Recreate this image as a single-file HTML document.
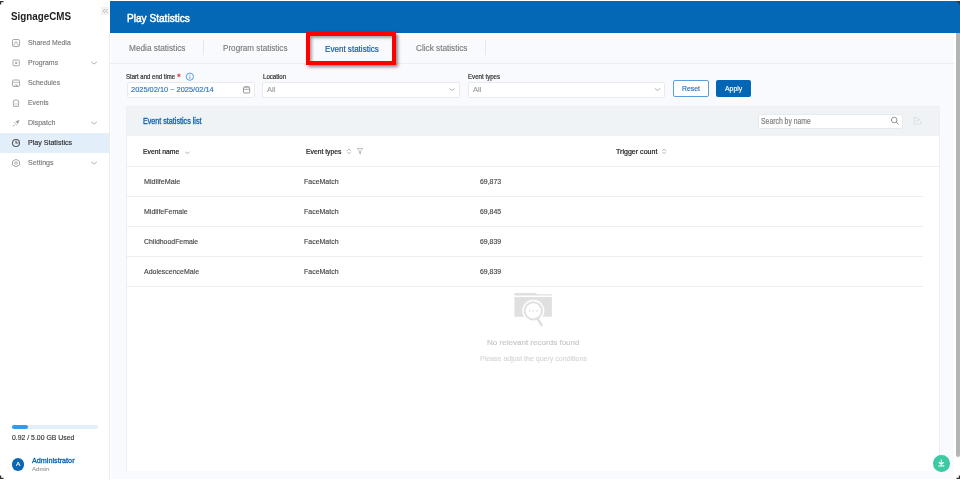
<!DOCTYPE html><html><head><meta charset="utf-8"><style>
*{margin:0;padding:0;box-sizing:border-box}
html,body{width:960px;height:480px;overflow:hidden;background:#fff;font-family:"Liberation Sans",sans-serif}
.t{position:absolute;white-space:nowrap;transform-origin:0 0;-webkit-text-stroke:0.15px currentColor}
.t.bd{-webkit-text-stroke:0}
.t.md{-webkit-text-stroke:0.2px currentColor}
.b{position:absolute}
</style></head><body>
<!-- sidebar -->
<div class="b" style="left:109px;top:33px;width:1px;height:447px;background:#ececec"></div>
<div class="b" style="left:101px;top:7px;width:8px;height:8px;background:#f2f2f2;border-radius:1px"></div>
<svg class="b" style="left:102px;top:8px" width="6" height="6" viewBox="0 0 6 6"><path d="M3 1 L1 3 L3 5 M5.5 1 L3.5 3 L5.5 5" stroke="#aaa" stroke-width="0.7" fill="none"/></svg>
<div class="b" style="left:0;top:133px;width:109px;height:20px;background:#e3eefb"></div>
<!-- main -->
<div class="b" style="left:110px;top:1px;width:850px;height:32px;background:#0468b7"></div>
<div class="b" style="left:110px;top:33px;width:846px;height:447px;background:#fff"></div>
<div class="b" style="left:111px;top:35px;width:843px;height:444px;background:#f9fafd"></div>
<div class="b" style="left:110px;top:63px;width:844px;height:1px;background:#ebedf0"></div>
<div class="b" style="left:203px;top:40px;width:1px;height:15px;background:#e6e8eb"></div>
<div class="b" style="left:485px;top:40px;width:1px;height:15px;background:#e6e8eb"></div>
<!-- red box -->
<div class="b" style="left:306px;top:32px;width:90px;height:33px;border:4px solid #f00;box-shadow:2px 2px 3px rgba(0,0,0,.45), inset 2px 2px 3px rgba(0,0,0,.35)"></div>
<!-- inputs -->
<div class="b" style="left:126.5px;top:81.5px;width:128px;height:16px;background:#fff;border:1px solid #e8eaee;border-radius:2px"></div>
<div class="b" style="left:262.3px;top:81.5px;width:197.5px;height:16px;background:#fff;border:1px solid #e8eaee;border-radius:2px"></div>
<div class="b" style="left:467.8px;top:81.5px;width:197.5px;height:16px;background:#fff;border:1px solid #e8eaee;border-radius:2px"></div>
<div class="b" style="left:673px;top:80px;width:36px;height:17px;background:#fff;border:1px solid #5e9ed6;border-radius:2px"></div>
<div class="b" style="left:716px;top:80px;width:35px;height:17px;background:#0366b4;border-radius:2px"></div>
<!-- card -->
<div class="b" style="left:126px;top:105.5px;width:814px;height:365.5px;background:#fff;border:1px solid #eceef1;border-bottom:none;border-radius:2px 2px 0 0"></div>
<div class="b" style="left:127px;top:106.5px;width:812px;height:29.5px;background:#f0f3f6"></div>
<div class="b" style="left:757.7px;top:113.6px;width:145.5px;height:15.3px;background:#fff;border:1px solid #e6e9ed;border-radius:2px"></div>
<div class="b" style="left:127px;top:166px;width:812px;height:1px;background:#eceef1"></div>
<div class="b" style="left:127px;top:196px;width:796px;height:1px;background:#eceef1"></div>
<div class="b" style="left:127px;top:226px;width:796px;height:1px;background:#eceef1"></div>
<div class="b" style="left:127px;top:256px;width:796px;height:1px;background:#eceef1"></div>
<div class="b" style="left:127px;top:286px;width:796px;height:1px;background:#eceef1"></div>
<!-- scrollbar -->
<div class="b" style="left:956px;top:33px;width:4px;height:424px;background:#b4b4b4;border-radius:0 0 2px 2px"></div>
<!-- green fab -->
<div class="b" style="left:933px;top:455px;width:16.5px;height:16.5px;background:#3ccaa4;border-radius:50%"></div>
<!-- progress -->
<div class="b" style="left:12px;top:425.3px;width:85.5px;height:4px;background:#e3effb;border-radius:2px"></div>
<div class="b" style="left:12px;top:425.3px;width:16px;height:4px;background:#2c9cf2;border-radius:2px"></div>
<!-- avatar -->
<div class="b" style="left:11.9px;top:458.1px;width:12.5px;height:12.5px;background:#0a67b5;border-radius:50%"></div>
<!-- empty icon -->
<svg class="b" style="left:510px;top:290px" width="48" height="40" viewBox="0 0 48 40">
<path d="M4.4 3.1 H26 L27 4.2 H41.9 V5.4 H4.4 Z" fill="#e0e0e0"/>
<path d="M4.4 7 H41.9 V26.8 H4.4 Z" fill="#e0e0e0"/>
<circle cx="23.3" cy="20.8" r="11" fill="#fff"/>
<circle cx="23.3" cy="20.8" r="8.6" fill="#fff" stroke="#e0e0e0" stroke-width="2"/>
<path d="M27.2 28 L31.5 35" stroke="#e0e0e0" stroke-width="2.6" stroke-linecap="round"/>
<circle cx="19.6" cy="20.9" r="0.8" fill="#e0e0e0"/><circle cx="23.3" cy="20.9" r="0.8" fill="#e0e0e0"/><circle cx="27" cy="20.9" r="0.8" fill="#e0e0e0"/>
</svg>
<!-- sidebar icons -->
<svg class="b" style="left:0;top:0" width="110" height="480" viewBox="0 0 110 480">
 <g fill="none" stroke="#a8a8a8" stroke-width="1">
  <rect x="12.5" y="39.5" width="7" height="7" rx="1.3"/>
  <path d="M13.5 45.5 L16 41.3 L18.5 45.5" stroke-width="0.9"/>
  <rect x="13" y="60" width="6.3" height="5.8" rx="0.6"/>
  <rect x="15.1" y="61.8" width="2.1" height="2.2" fill="#b0b0b0" stroke="none"/>
  <rect x="12.5" y="80" width="7" height="6.5" rx="1.3"/>
  <path d="M12.5 82.3 H19.5 M14 86 L15.5 84.5 L17 86 M16.3 84.4 L18 86" stroke-width="0.8"/>
  <path d="M13.4 100.8 Q16 98.6 18.6 100.8 V106.3 H13.4 Z"/>
  <path d="M14.5 104 H17.5" stroke-width="0.6"/>
 </g>
 <g fill="#9a9a9a">
  <path d="M19.6 119.8 L15.5 121.6 L17.9 124 Z"/>
  <path d="M14.2 122.3 L15.3 123.5 M16 124.3 L17 125.3" stroke="#9a9a9a" stroke-width="1"/>
  <path d="M12.5 126.3 L14.5 124.6 L14.2 126.3 Z"/>
 </g>
 <circle cx="16" cy="143" r="3.5" fill="none" stroke="#5a5a5a" stroke-width="1.1"/>
 <path d="M16 140.5 V143 H18.5" fill="none" stroke="#5a5a5a" stroke-width="1.1"/>
 <path d="M16 159.4 L19.5 161.3 V164.9 L16 166.8 L12.5 164.9 V161.3 Z" fill="none" stroke="#a8a8a8" stroke-width="1"/>
 <circle cx="16" cy="163.1" r="1.3" fill="none" stroke="#a8a8a8" stroke-width="0.9"/>
 <g fill="none" stroke="#a0a0a0" stroke-width="0.8">
  <path d="M91.2 62 L94 64 L96.8 62"/>
  <path d="M91.2 122 L94 124 L96.8 122"/>
  <path d="M91.2 162 L94 164 L96.8 162"/>
 </g>
</svg>
<!-- filter icons -->
<svg class="b" style="left:0;top:0" width="960" height="480" viewBox="0 0 960 480">
 <path d="M178.9 73.6 V77.2 M177.3 74.6 L180.5 76.2 M180.5 74.6 L177.3 76.2" stroke="#d9363e" stroke-width="0.9"/>
 <circle cx="189.9" cy="76.7" r="3.6" fill="none" stroke="#3d8fd8" stroke-width="0.85"/>
 <path d="M189.9 74.8 V75.6 M189.9 76.6 V78.6" stroke="#3d8fd8" stroke-width="0.9"/>
 <rect x="243.5" y="87" width="6.2" height="6" rx="0.8" fill="none" stroke="#8f8f8f" stroke-width="0.9"/>
 <path d="M243.5 89.3 H249.7 M245 86 V87.5 M246.6 86 V87.5 M248.2 86 V87.5" stroke="#8f8f8f" stroke-width="0.8"/>
 <path d="M449.3 88.6 L452 90.4 L454.7 88.6" fill="none" stroke="#a0a0a0" stroke-width="0.8"/>
 <path d="M654.8 88.6 L657.5 90.4 L660.2 88.6" fill="none" stroke="#a0a0a0" stroke-width="0.8"/>
 <!-- table header icons -->
 <path d="M185.3 152 L187.4 153.5 L189.5 152" fill="none" stroke="#9a9a9a" stroke-width="0.8"/>
 <path d="M347.4 150.7 L349.05 148.9 L350.7 150.7 M347.4 152.1 L349.05 153.9 L350.7 152.1" fill="none" stroke="#a8a8a8" stroke-width="0.75" stroke-linecap="round" stroke-linejoin="round"/>
 <path d="M357.3 148.4 H362.7 L360.5 151.3 V154 L359.5 153.3 V151.3 Z" fill="none" stroke="#a0a0a0" stroke-width="0.7" stroke-linejoin="round"/>
 <path d="M662.5 150.7 L664.15 148.9 L665.8 150.7 M662.5 152.1 L664.15 153.9 L665.8 152.1" fill="none" stroke="#a8a8a8" stroke-width="0.75" stroke-linecap="round" stroke-linejoin="round"/>
 <circle cx="894.2" cy="120" r="2.8" fill="none" stroke="#8a8a8a" stroke-width="0.9"/>
 <path d="M896.2 122 L898.6 124.4" stroke="#8a8a8a" stroke-width="1"/>
 <path d="M917.5 117.5 H914 V124 H920.7 V121 M915.8 122 Q916.5 119.5 919.5 119.5 M918.5 118.3 L920 119.5 L918.5 120.7" fill="none" stroke="#d5dadf" stroke-width="0.8"/>
 <!-- fab icon -->
 <path d="M941.3 459.6 V464 M938.7 462.2 L941.3 464.3 L943.9 462.2" fill="none" stroke="#fff" stroke-width="1.1"/>
 <rect x="938.3" y="465.4" width="6" height="1.1" fill="#fff"/>
 <!-- corners -->
 <path d="M0 1 H3.5 V2.2 H1.2 V4.5 H0 Z" fill="#333" style="filter:blur(0.4px)"/>
 <path d="M960 1 H956.5 V2.2 H958.8 V4.5 H960 Z" fill="#333" style="filter:blur(0.4px)"/>
 <path d="M0 479 H3.5 V477.8 H1.2 V475.5 H0 Z" fill="#333" style="filter:blur(0.4px)"/>
 <path d="M960 479 H956.5 V477.8 H958.8 V475.5 H960 Z" fill="#333" style="filter:blur(0.4px)"/>
</svg>

<div class="t bd" style="left:11.25px;top:10.56px;font-size:10.68px;line-height:10.68px;font-weight:bold;color:#222;transform:scaleX(0.9191);letter-spacing:0.000px;">SignageCMS</div>
<div class="t" style="left:28.10px;top:39.03px;font-size:7.40px;line-height:7.40px;color:#7a7a7a;transform:scaleX(0.9281);letter-spacing:0.000px;">Shared Media</div>
<div class="t" style="left:28.10px;top:59.03px;font-size:7.40px;line-height:7.40px;color:#7a7a7a;transform:scaleX(0.9396);letter-spacing:0.000px;">Programs</div>
<div class="t" style="left:28.10px;top:79.03px;font-size:7.40px;line-height:7.40px;color:#7a7a7a;transform:scaleX(0.9300);letter-spacing:0.000px;">Schedules</div>
<div class="t" style="left:28.10px;top:99.03px;font-size:7.40px;line-height:7.40px;color:#7a7a7a;transform:scaleX(0.9132);letter-spacing:0.000px;">Events</div>
<div class="t" style="left:28.10px;top:119.03px;font-size:7.40px;line-height:7.40px;color:#7a7a7a;transform:scaleX(0.9550);letter-spacing:0.000px;">Dispatch</div>
<div class="t" style="left:28.10px;top:139.03px;font-size:7.40px;line-height:7.40px;color:#2a2a2a;transform:scaleX(0.9581);letter-spacing:0.000px;">Play Statistics</div>
<div class="t" style="left:28.10px;top:159.03px;font-size:7.40px;line-height:7.40px;color:#7a7a7a;transform:scaleX(0.9586);letter-spacing:0.000px;">Settings</div>
<div class="t md" style="left:126.80px;top:13.57px;font-size:10.20px;line-height:10.20px;color:#fff;transform:scaleX(0.9911);letter-spacing:0.000px;-webkit-text-stroke:0.45px currentColor;">Play Statistics</div>
<div class="t" style="left:128.70px;top:43.97px;font-size:8.66px;line-height:8.66px;color:#7c7c7c;transform:scaleX(0.9546);letter-spacing:0.000px;">Media statistics</div>
<div class="t" style="left:222.50px;top:43.97px;font-size:8.66px;line-height:8.66px;color:#7c7c7c;transform:scaleX(0.9375);letter-spacing:0.000px;">Program statistics</div>
<div class="t md" style="left:324.50px;top:44.57px;font-size:8.66px;line-height:8.66px;color:#0c60ab;transform:scaleX(0.9315);letter-spacing:0.000px;">Event statistics</div>
<div class="t" style="left:415.50px;top:43.97px;font-size:8.66px;line-height:8.66px;color:#7c7c7c;transform:scaleX(0.9470);letter-spacing:0.000px;">Click statistics</div>
<div class="t md" style="left:126.25px;top:74.04px;font-size:6.56px;line-height:6.56px;color:#333;transform:scaleX(0.9183);letter-spacing:0.000px;">Start and end time</div>
<div class="t md" style="left:262.80px;top:74.04px;font-size:6.56px;line-height:6.56px;color:#333;transform:scaleX(0.9350);letter-spacing:0.000px;">Location</div>
<div class="t md" style="left:468.30px;top:74.04px;font-size:6.56px;line-height:6.56px;color:#333;transform:scaleX(0.9388);letter-spacing:0.000px;">Event types</div>
<div class="t" style="left:131.25px;top:86.01px;font-size:7.61px;line-height:7.61px;color:#2b76c2;transform:scaleX(0.9750);letter-spacing:0.000px;">2025/02/10 ~ 2025/02/14</div>
<div class="t" style="left:267.20px;top:86.01px;font-size:7.61px;line-height:7.61px;color:#9a9a9a;transform:scaleX(0.9824);letter-spacing:0.000px;">All</div>
<div class="t" style="left:473.00px;top:86.01px;font-size:7.61px;line-height:7.61px;color:#9a9a9a;transform:scaleX(0.9824);letter-spacing:0.000px;">All</div>
<div class="t" style="left:682.00px;top:85.12px;font-size:7.54px;line-height:7.54px;color:#1f6bb5;transform:scaleX(0.9094);letter-spacing:0.000px;">Reset</div>
<div class="t" style="left:725.00px;top:85.12px;font-size:7.54px;line-height:7.54px;color:#fff;transform:scaleX(0.9122);letter-spacing:0.000px;">Apply</div>
<div class="t md" style="left:143.20px;top:116.71px;font-size:8.38px;line-height:8.38px;color:#0a62b3;transform:scaleX(0.8545);letter-spacing:0.000px;-webkit-text-stroke:0.32px currentColor;">Event statistics list</div>
<div class="t" style="left:761.40px;top:116.91px;font-size:8.38px;line-height:8.38px;color:#7a7a7a;transform:scaleX(0.8180);letter-spacing:0.000px;">Search by name</div>
<div class="t md" style="left:143.20px;top:148.93px;font-size:6.70px;line-height:6.70px;color:#222;transform:scaleX(1.0149);letter-spacing:0.000px;">Event name</div>
<div class="t md" style="left:305.70px;top:148.93px;font-size:6.70px;line-height:6.70px;color:#222;transform:scaleX(1.0135);letter-spacing:0.000px;">Event types</div>
<div class="t md" style="left:615.50px;top:148.93px;font-size:6.70px;line-height:6.70px;color:#222;transform:scaleX(1.0573);letter-spacing:0.000px;">Trigger count</div>
<div class="t" style="left:143.80px;top:177.63px;font-size:7.40px;line-height:7.40px;color:#454545;transform:scaleX(0.9728);letter-spacing:0.000px;">MidlifeMale</div>
<div class="t" style="left:304.40px;top:177.63px;font-size:7.40px;line-height:7.40px;color:#454545;transform:scaleX(0.9453);letter-spacing:0.000px;">FaceMatch</div>
<div class="t" style="left:479.80px;top:177.63px;font-size:7.40px;line-height:7.40px;color:#454545;transform:scaleX(0.9359);letter-spacing:0.000px;">69,873</div>
<div class="t" style="left:143.80px;top:207.63px;font-size:7.40px;line-height:7.40px;color:#454545;transform:scaleX(0.9484);letter-spacing:0.000px;">MidlifeFemale</div>
<div class="t" style="left:304.40px;top:207.63px;font-size:7.40px;line-height:7.40px;color:#454545;transform:scaleX(0.9453);letter-spacing:0.000px;">FaceMatch</div>
<div class="t" style="left:479.80px;top:207.63px;font-size:7.40px;line-height:7.40px;color:#454545;transform:scaleX(0.9359);letter-spacing:0.000px;">69,845</div>
<div class="t" style="left:143.90px;top:237.63px;font-size:7.40px;line-height:7.40px;color:#454545;transform:scaleX(0.9357);letter-spacing:0.000px;">ChildhoodFemale</div>
<div class="t" style="left:304.40px;top:237.63px;font-size:7.40px;line-height:7.40px;color:#454545;transform:scaleX(0.9453);letter-spacing:0.000px;">FaceMatch</div>
<div class="t" style="left:479.80px;top:237.63px;font-size:7.40px;line-height:7.40px;color:#454545;transform:scaleX(0.9359);letter-spacing:0.000px;">69,839</div>
<div class="t" style="left:143.90px;top:267.63px;font-size:7.40px;line-height:7.40px;color:#454545;transform:scaleX(0.9428);letter-spacing:0.000px;">AdolescenceMale</div>
<div class="t" style="left:304.40px;top:267.63px;font-size:7.40px;line-height:7.40px;color:#454545;transform:scaleX(0.9453);letter-spacing:0.000px;">FaceMatch</div>
<div class="t" style="left:479.80px;top:267.63px;font-size:7.40px;line-height:7.40px;color:#454545;transform:scaleX(0.9359);letter-spacing:0.000px;">69,839</div>
<div class="t md" style="left:486.90px;top:338.54px;font-size:8.10px;line-height:8.10px;color:#c9c9c9;transform:scaleX(0.9936);letter-spacing:0.000px;">No relevant records found</div>
<div class="t" style="left:479.80px;top:354.79px;font-size:6.98px;line-height:6.98px;color:#d6d6d6;transform:scaleX(1.0061);letter-spacing:0.000px;">Please adjust the query conditions</div>
<div class="t" style="left:11.90px;top:433.82px;font-size:7.54px;line-height:7.54px;color:#333;transform:scaleX(0.9132);letter-spacing:0.000px;">0.92 / 5.00 GB Used</div>
<div class="t md" style="left:32.20px;top:456.85px;font-size:7.26px;line-height:7.26px;color:#0a62b3;transform:scaleX(0.9959);letter-spacing:0.000px;-webkit-text-stroke:0.3px currentColor;">Administrator</div>
<div class="t" style="left:32.20px;top:466.91px;font-size:5.31px;line-height:5.31px;color:#a0a0a0;transform:scaleX(1.1498);letter-spacing:0.000px;">Admin</div>
<div class="t" style="left:16.00px;top:461.40px;font-size:6.15px;line-height:6.15px;color:#fff;transform:scaleX(1.0687);letter-spacing:0.000px;">A</div>
</body></html>
